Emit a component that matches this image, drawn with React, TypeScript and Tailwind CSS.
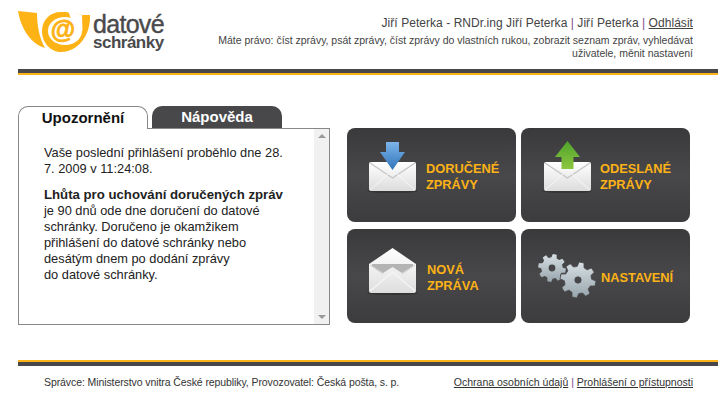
import { useId } from 'react'

function gearPath(cx: number, cy: number, r: number, teeth: number, hole: number) {
  const inner = r * 0.76
  const pts: string[] = []
  for (let i = 0; i < teeth; i++) {
    const a = (i / teeth) * Math.PI * 2 + 0.2
    const s = (Math.PI * 2) / teeth
    const add = (rad: number, off: number) => {
      const x = cx + Math.cos(a + off * s) * rad
      const y = cy + Math.sin(a + off * s) * rad
      pts.push(`${x.toFixed(2)} ${y.toFixed(2)}`)
    }
    add(inner, -0.32)
    add(r, -0.18)
    add(r, 0.18)
    add(inner, 0.32)
  }
  const ring = `M${cx - hole} ${cy}a${hole} ${hole} 0 1 0 ${hole * 2} 0a${hole} ${hole} 0 1 0 ${-hole * 2} 0z`
  return `M${pts.join('L')}z${ring}`
}

function Logo() {
  return (
    <svg width="74" height="42" viewBox="0 0 74 42" className="shrink-0">
      {/* horn */}
      <path d="M0 0 L19 2 C19 16 22 28 27 37 C13 33 3 18 0 0z" fill="#fdb216" />
      {/* ring and crescent */}
      <path d="M64 4 L72 4 C73 24 60 41 43 41 C32 41 24 31 24 20 C24 9 32 1 43 1 C52 1 60 3 64 4z" fill="#fdb216" />
      <ellipse cx="47" cy="20" rx="17" ry="14" fill="#fff" />
      <path d="M50 0 L64 4 L64.500 20 L54 10z" fill="#fff" />
      <text x="45" y="27" textAnchor="middle" fontSize="25" fontWeight="700" fill="#fdb216" stroke="#fdb216" strokeWidth="0.8">
        @
      </text>
    </svg>
  )
}

function Envelope({ x, y }: { x: number; y: number }) {
  const id = useId()
  return (
    <g transform={`translate(${x} ${y})`}>
      <defs>
        <linearGradient id={id} x1="0" y1="0" x2="0" y2="1">
          <stop offset="0" stopColor="#ffffff" />
          <stop offset="1" stopColor="#dcdcdc" />
        </linearGradient>
      </defs>
      <ellipse cx="24" cy="29" rx="26" ry="2" fill="#2a2a2a" opacity="0.6" />
      <rect x="0" y="0" width="47" height="29" rx="2" fill={`url(#${id})`} />
      <path d="M1 1 L23.500 16 L46 1" fill="none" stroke="#c4c4c4" strokeWidth="1.200" />
      <path d="M1 28 L19 12 M46 28 L28 12" fill="none" stroke="#f8f8f8" strokeWidth="1" />
    </g>
  )
}

function IconIn() {
  const id = useId()
  return (
    <svg width="70" height="94" viewBox="0 0 70 94" className="shrink-0">
      <defs>
        <linearGradient id={id} x1="0" y1="0" x2="0" y2="1">
          <stop offset="0" stopColor="#7cb4ea" />
          <stop offset="1" stopColor="#2f74ba" />
        </linearGradient>
      </defs>
      <Envelope x={22} y={34} />
      <path d="M39 14 H52 V24 H58 L45.500 42 L33 24 H39z" fill={`url(#${id})`} />
    </svg>
  )
}

function IconOut() {
  const id = useId()
  return (
    <svg width="70" height="94" viewBox="0 0 70 94" className="shrink-0">
      <defs>
        <linearGradient id={id} x1="0" y1="0" x2="0" y2="1">
          <stop offset="0" stopColor="#4fa32c" />
          <stop offset="1" stopColor="#8cc63f" />
        </linearGradient>
      </defs>
      <Envelope x={23} y={34} />
      <path d="M46.500 13 L59 29 H52.500 V41 H40.500 V29 H34z" fill={`url(#${id})`} />
    </svg>
  )
}

function IconNew() {
  const id = useId()
  return (
    <svg width="70" height="94" viewBox="0 0 70 94" className="shrink-0">
      <defs>
        <linearGradient id={id} x1="0" y1="0" x2="0" y2="1">
          <stop offset="0" stopColor="#ffffff" />
          <stop offset="1" stopColor="#dedede" />
        </linearGradient>
      </defs>
      <ellipse cx="46" cy="64" rx="26" ry="2" fill="#2a2a2a" opacity="0.6" />
      <path d="M22 35 L45.500 19 L69 35 V62 Q69 64 67 64 H24 Q22 64 22 62z" fill={`url(#${id})`} />
      <path d="M25 35 H66 V37 L55 44 L45.500 38 L36 44 L25 37z" fill="#b4b4b4" />
      <path d="M23 62 L45.500 43 L68 62" fill="none" stroke="#f6f6f6" strokeWidth="1.200" />
      <path d="M23 36 L36 45 M68 36 L55 45" fill="none" stroke="#cfcfcf" strokeWidth="1" />
    </svg>
  )
}

function IconGears() {
  const id = useId()
  return (
    <svg width="80" height="94" viewBox="0 0 80 94" className="shrink-0">
      <defs>
        <linearGradient id={id} x1="0" y1="0" x2="0" y2="1">
          <stop offset="0" stopColor="#d6dfe4" />
          <stop offset="1" stopColor="#98a5ac" />
        </linearGradient>
      </defs>
      <path d={gearPath(31, 39, 14, 8, 3.4)} fill={`url(#${id})`} fillRule="evenodd" />
      <path d={gearPath(57, 51, 18, 8, 3.2)} fill={`url(#${id})`} fillRule="evenodd" stroke="#47474a" strokeWidth="0.8" />
    </svg>
  )
}

function Tile({ icon, label, gap }: { icon: React.ReactNode; label: React.ReactNode; gap: string }) {
  return (
    <a className={`flex h-[94px] items-center rounded-lg bg-gradient-to-b from-[#3a3a3c] via-[#48484a] to-[#3c3c3e] text-[12.8px] font-bold leading-4 text-[#fdb216] ${gap}`}>
      {icon}
      <span className="pt-[4px]">{label}</span>
    </a>
  )
}

export default function App() {
  return (
    <div className="h-[409px] w-[725px] overflow-hidden bg-white pl-[18px] pr-[7px] font-['Liberation_Sans',Arial,sans-serif] text-[#333]">
      {/* Header */}
      <header className="flex h-[69px] justify-between">
        <div className="flex items-start pt-[11px]">
          <Logo />
          <div className="ml-px mt-[2px] font-bold text-[#4a4a4c]">
            <div className="text-[25px] font-normal leading-[22px] tracking-[-0.7px] [-webkit-text-stroke:0.4px_#4a4a4c]">datové</div>
            <div className="text-[17px] leading-4 tracking-[-0.5px]">schránky</div>
          </div>
        </div>
        <div className="pr-[25px] pt-[15px] text-right">
          <p className="text-[12px] leading-4 tracking-[0.05px] text-[#444]">
            Jiří Peterka - RNDr.ing Jiří Peterka <span className="text-[#7a4a8c]">|</span> Jiří Peterka{' '}
            <span className="text-[#7a4a8c]">|</span> <a className="underline">Odhlásit</a>
          </p>
          <p className="mt-[3px] text-[10.5px] leading-[13px] tracking-[-0.02px] text-[#444]">
            Máte právo: číst zprávy, psát zprávy, číst zprávy do vlastních rukou, zobrazit seznam zpráv, vyhledávat
            <br />
            uživatele, měnit nastavení
          </p>
        </div>
      </header>
      <div className="h-[4px] bg-[#48484a]" />
      <div className="h-[2px] bg-[#fdb216]" />

      {/* Main */}
      <main className="flex h-[285px] pt-[31px]">
        <div className="w-[312px]">
          <div className="flex items-end gap-[4px]">
            <div className="relative z-10 -mb-px flex h-[23px] w-[130px] items-center justify-center rounded-t-[10px] border border-b-0 border-[#888] bg-white text-[15px] font-bold text-[#111]">
              Upozornění
            </div>
            <div className="flex h-[22px] w-[130px] items-center justify-center rounded-t-[10px] bg-[#48484a] text-[15px] font-bold text-white">
              Nápověda
            </div>
          </div>
          <div className="flex h-[197px] border border-[#888] bg-white">
            <div className="w-[295px] px-[25px] pt-[16px] text-[12.8px] leading-4 text-[#222]">
              <p>
                Vaše poslední přihlášení proběhlo dne 28.
                <br />7. 2009 v 11:24:08.
              </p>
              <p className="mt-[10px]">
                <b className="text-[13.200px]">Lhůta pro uchování doručených zpráv</b>
                <br />je 90 dnů ode dne doručení do datové
                <br />schránky. Doručeno je okamžikem
                <br />přihlášení do datové schránky nebo
                <br />desátým dnem po dodání zprávy
                <br />do datové schránky.
              </p>
            </div>
            <div className="flex w-[15px] flex-col items-center justify-between bg-[#f1f1f1] py-[5px]">
              <div className="h-0 w-0 border-x-[4px] border-b-[4px] border-x-transparent border-b-[#999]" />
              <div className="h-0 w-0 border-x-[4px] border-t-[4px] border-x-transparent border-t-[#999]" />
            </div>
          </div>
        </div>
        <div className="ml-[17px] mt-[22px] grid w-[343px] grid-cols-[169px_169px] gap-x-[5px] gap-y-[7px] self-start">
          <Tile icon={<IconIn />} gap="gap-[9px]" label={<>DORUČENÉ<br />ZPRÁVY</>} />
          <Tile icon={<IconOut />} gap="gap-[9px]" label={<>ODESLANÉ<br />ZPRÁVY</>} />
          <Tile icon={<IconNew />} gap="gap-[10px]" label={<>NOVÁ<br />ZPRÁVA</>} />
          <Tile icon={<IconGears />} gap="gap-0" label="NASTAVENÍ" />
        </div>
      </main>

      {/* Footer */}
      <div className="h-[2px] bg-[#fdb216]" />
      <div className="h-[4px] bg-[#48484a]" />
      <footer className="flex justify-between pl-[26px] pr-[25px] pt-[10px] text-[10.5px] leading-[13px] text-[#333]">
        <span className="tracking-[-0.09px]">Správce: Ministerstvo vnitra České republiky, Provozovatel: Česká pošta, s. p.</span>
        <span>
          <a className="underline">Ochrana osobních údajů</a> <span className="text-[#7a4a8c]">|</span>{' '}
          <a className="underline">Prohlášení o přístupnosti</a>
        </span>
      </footer>
    </div>
  )
}
